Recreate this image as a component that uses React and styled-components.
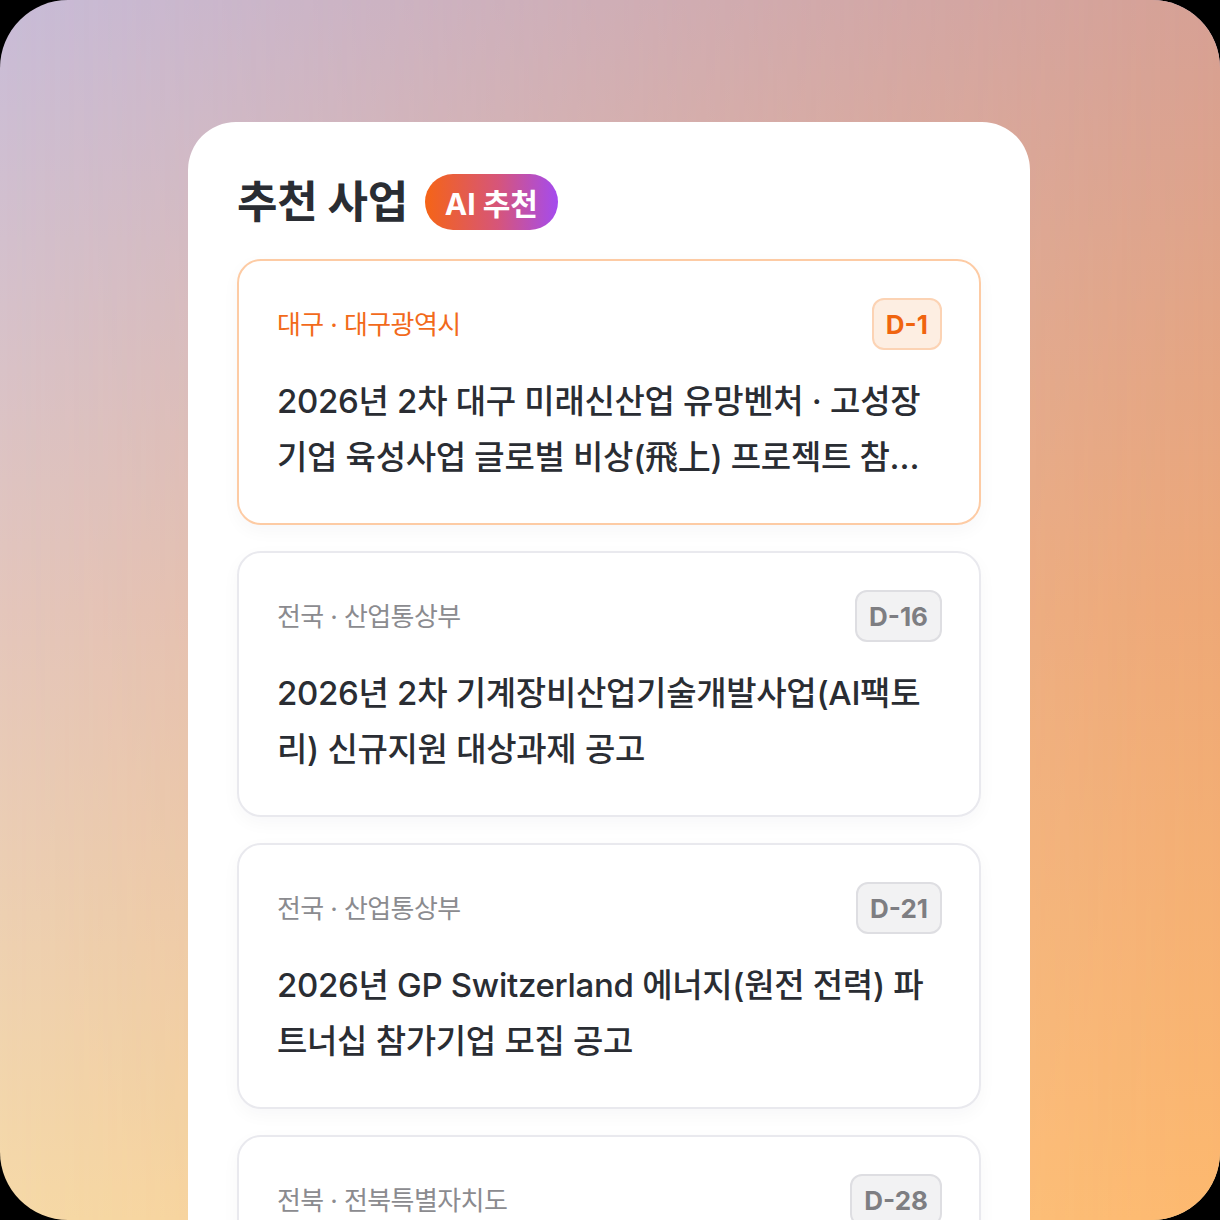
import React from "react";
import styled, { createGlobalStyle } from "styled-components";

const Global = createGlobalStyle`
  html, body { margin: 0; padding: 0; background: #000; }
  body { font-family: Inter, "Noto Sans CJK KR", sans-serif; }
  * { box-sizing: border-box; }
`;

const Frame = styled.div`
  position: relative;
  width: 1220px;
  height: 1220px;
  border-radius: 68px;
  overflow: hidden;
  background: linear-gradient(to bottom, #c8bcd8 0%, #e4c6bc 50%, #f6daa8 100%);
  &::before {
    content: "";
    position: absolute;
    inset: 0;
    background: linear-gradient(to bottom, #d6a094 0%, #eea876 50%, #fdb86e 100%);
    -webkit-mask-image: linear-gradient(to right, transparent 0%, #000 100%);
    mask-image: linear-gradient(to right, transparent 0%, #000 100%);
  }
`;

const Content = styled.div`
  position: relative;
  padding: 122px 190px 0 188px;
`;

const Panel = styled.section`
  width: 842px;
  height: 1098px;
  background: #fff;
  border-radius: 48px 48px 0 0;
  padding: 52px 49px 0;
  overflow: hidden;
`;

const Header = styled.div`
  display: flex;
  align-items: center;
  gap: 17px;
  height: 56px;
  margin-bottom: 29px;
`;

const Heading = styled.h2`
  margin: 0;
  font-size: 44px;
  font-weight: 700;
  color: #2a2d33;
  letter-spacing: -0.3px;
  line-height: 56px;
`;

const AiBadge = styled.span`
  display: inline-flex;
  align-items: center;
  height: 56px;
  padding: 0 20px;
  border-radius: 28px;
  background: linear-gradient(90deg, #f56416 0%, #d6557a 55%, #a44bef 100%);
  color: #fff;
  font-size: 30px;
  font-weight: 700;
  letter-spacing: 0;
`;

const List = styled.div`
  display: flex;
  flex-direction: column;
  gap: 26px;
`;

const Item = styled.article`
  border: 2px solid ${(p) => (p.$hot ? "#fdcba4" : "#e9e9ee")};
  border-radius: 24px;
  background: #fff;
  padding: 37px 37px 38px 38px;
  box-shadow: 0 6px 18px rgba(30, 30, 60, 0.035);
`;

const Top = styled.div`
  display: flex;
  justify-content: space-between;
  align-items: center;
  height: 52px;
  margin-bottom: 23px;
`;

const Meta = styled.span`
  font-size: 26px;
  letter-spacing: -0.6px;
  color: ${(p) => (p.$hot ? "#f26a1b" : "#8b8b8f")};
  margin-top: -4px;
`;

const DBadge = styled.span`
  display: inline-flex;
  align-items: center;
  justify-content: center;
  height: 52px;
  padding: 0 12px;
  border-radius: 12px;
  font-size: 26px;
  font-weight: 700;
  background: ${(p) => (p.$hot ? "#fdeee2" : "#f2f2f3")};
  border: 2px solid ${(p) => (p.$hot ? "#fcd3b4" : "#dedee2")};
  color: ${(p) => (p.$hot ? "#f0640f" : "#7e7e82")};
`;

const Title = styled.p`
  margin: 0;
  font-size: 33px;
  font-weight: 500;
  line-height: 56px;
  color: #2a2d33;
  letter-spacing: -0.3px;
  display: -webkit-box;
  -webkit-line-clamp: 2;
  -webkit-box-orient: vertical;
  overflow: hidden;
`;

const items = [
  { meta: "대구 · 대구광역시", d: "D-1", hot: true, title: "2026년 2차 대구 미래신산업 유망벤처 · 고성장 기업 육성사업 글로벌 비상(飛上) 프로젝트 참가기업 모집 공고" },
  { meta: "전국 · 산업통상부", d: "D-16", title: "2026년 2차 기계장비산업기술개발사업(AI팩토리) 신규지원 대상과제 공고" },
  { meta: "전국 · 산업통상부", d: "D-21", title: "2026년 GP Switzerland 에너지(원전 전력) 파트너십 참가기업 모집 공고" },
  { meta: "전북 · 전북특별자치도", d: "D-28", title: "2026년 전북 중소기업 지원사업 공고" },
];

export default function App() {
  return (
    <>
      <Global />
      <Frame>
        <Content>
          <Panel>
            <Header>
              <Heading>추천 사업</Heading>
              <AiBadge>AI 추천</AiBadge>
            </Header>
            <List>
              {items.map((it, i) => (
                <Item key={i} $hot={it.hot}>
                  <Top>
                    <Meta $hot={it.hot}>{it.meta}</Meta>
                    <DBadge $hot={it.hot}>{it.d}</DBadge>
                  </Top>
                  <Title>{it.title}</Title>
                </Item>
              ))}
            </List>
          </Panel>
        </Content>
      </Frame>
    </>
  );
}
